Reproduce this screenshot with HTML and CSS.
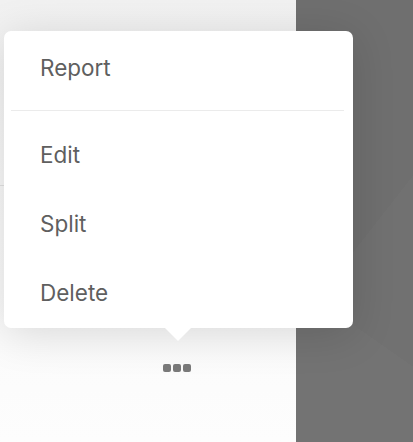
FILE: index.html
```html
<!DOCTYPE html>
<html lang="en">
<head>
  <meta charset="UTF-8" />
  <title>Menu</title>
  <link rel="stylesheet" href="styles.css">
</head>
<body>

  <div class="list">
    <div class="list-row"></div>
    <button class="more" title="More">
      <span></span><span></span><span></span>
    </button>

    <ul class="menu">
      <li class="menu-item first">Report</li>
      <li class="menu-sep"></li>
      <li class="menu-item">Edit</li>
      <li class="menu-item">Split</li>
      <li class="menu-item">Delete</li>
    </ul>
  </div>

  <div class="side"></div>

</body>
</html>
```

FILE: styles.css
```css
:root {
  --text: #5f5f5f;
  --line: #ebebeb;
  --side: #6f6f6f;
  --dots: #7a7a7a;
}
* { box-sizing: border-box; margin: 0; padding: 0; }
html, body { height: 100%; overflow: hidden; }
body {
  font-family: 'Inter', 'Noto Sans', sans-serif;
  display: flex;
  background: #fff;
}
.list {
  position: relative;
  width: 296px;
  height: 100%;
  background: linear-gradient(180deg, #f1f1f1 0%, #f8f8f8 40%, #fdfdfd 100%);
}
.list-row {
  height: 186px;
  border-bottom: 1px solid #e2e2e2;
}
.more {
  display: flex;
  gap: 2px;
  margin: 178px 0 0 163px;
  background: none;
  border: none;
  cursor: pointer;
}
.more span {
  width: 8px;
  height: 8px;
  border-radius: 2px;
  background: var(--dots);
}
.side {
  flex: 1;
  background:
    linear-gradient(128deg, transparent 55%, rgba(255,255,255,0.015) 55%),
    linear-gradient(35deg, rgba(255,255,255,0.015) 30%, transparent 30%),
    var(--side);
}

/* popup menu over the list */
.menu {
  position: absolute;
  top: 31px;
  left: 4px;
  width: 349px;
  height: 297px;
  list-style: none;
  padding-top: 5px;
  background: #fff;
  border-radius: 7px;
  box-shadow: 0 6px 44px rgba(0,0,0,0.14);
  z-index: 10;
}
.menu::after {
  content: '';
  position: absolute;
  left: 161px;
  bottom: -13px;
  border-left: 13px solid transparent;
  border-right: 13px solid transparent;
  border-top: 13px solid #fff;
}
.menu-item {
  padding-left: 36px;
  font-size: 22.5px;
  line-height: 69px;
  color: var(--text);
  cursor: pointer;
}
.menu-item.first { line-height: 64px; }
.menu-sep {
  height: 1px;
  margin: 10px 9px 9px 7px;
  background: var(--line);
}
```
